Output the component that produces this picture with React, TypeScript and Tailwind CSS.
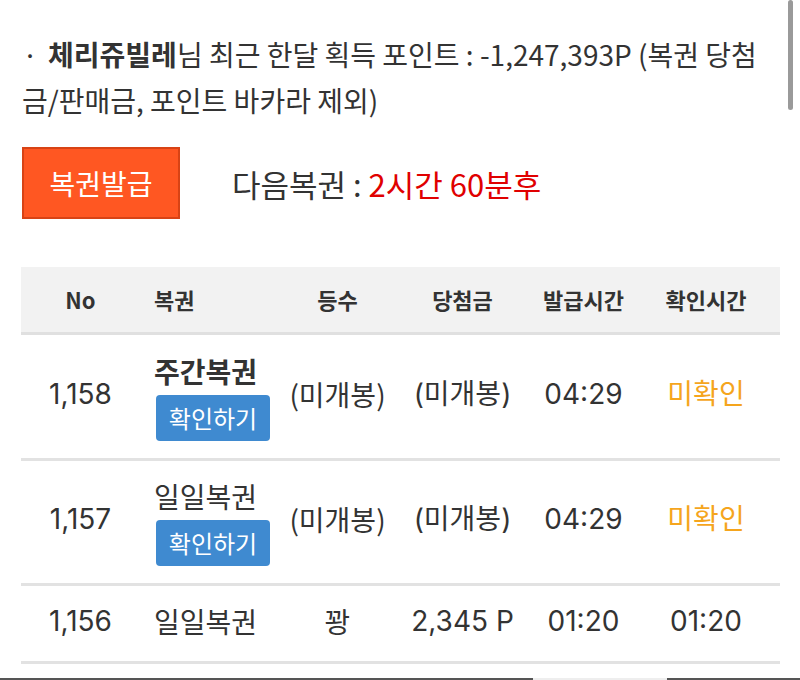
import React from "react";

const font = { fontFamily: '"Noto Sans CJK KR", "Noto Sans", sans-serif' };
const numFont = { fontFamily: '"Inter", "Noto Sans CJK KR", sans-serif' };

type Row = {
  no: string;
  name: string;
  bold?: boolean;
  check?: boolean;
  rank: string;
  prize: string;
  issued: string;
  confirmed: string;
  pending?: boolean;
  h: string;
};

const rows: Row[] = [
  { no: "1,158", name: "주간복권", bold: true, check: true, rank: "(미개봉)", prize: "(미개봉)", issued: "04:29", confirmed: "미확인", pending: true, h: "h-[126px]" },
  { no: "1,157", name: "일일복권", check: true, rank: "(미개봉)", prize: "(미개봉)", issued: "04:29", confirmed: "미확인", pending: true, h: "h-[125px]" },
  { no: "1,156", name: "일일복권", rank: "꽝", prize: "2,345 P", issued: "01:20", confirmed: "01:20", h: "h-[78px]" },
];

const cols = "grid grid-cols-[119px_145px_105px_145px_97px_148px]";

export default function App() {
  return (
    <div className="relative w-[800px] h-[680px] overflow-hidden bg-white text-[#333]" style={font}>
      <div className="pl-[22px] pr-[30px] pt-[31px]">
        <p className="text-[28px] leading-[46px] text-[#333]">
          <span className="ml-[4px] mr-[14px] leading-none" style={numFont}>·</span>
          <b className="font-bold">체리쥬빌레</b>님 최근 한달 획득 포인트 : -1,247,393P (복권 당첨금/판매금, 포인트 바카라 제외)
        </p>
        <div className="mt-[24px] flex items-center">
          <button className="w-[158px] h-[72px] bg-[#ff5722] border-2 border-[#d84315] text-white text-[28px] leading-none">
            복권발급
          </button>
          <div className="ml-[52px] text-[31px] leading-none">
            <span className="text-[#333]">다음복권 : </span>
            <span className="text-[#e00000]">2시간 60분후</span>
          </div>
        </div>
      </div>

      <div className="mt-[48px] ml-[21px] w-[759px]">
        <div className={`${cols} h-[68px] items-center bg-[#f2f2f2] border-b-[3px] border-[#e0e0e0] text-[22px] font-bold text-[#333]`}>
          <div className="text-center">No</div>
          <div className="pl-[14px]">복권</div>
          <div className="text-center">등수</div>
          <div className="text-center">당첨금</div>
          <div className="text-center">발급시간</div>
          <div className="text-center">확인시간</div>
        </div>
        {rows.map((r) => (
          <div
            key={r.no}
            className={`${cols} ${r.h} items-center border-b-[3px] border-[#e2e2e2] text-[28px] text-[#333]`}
          >
            <div className="text-center pb-[6px]" style={numFont}>{r.no}</div>
            <div className={`pl-[14px] flex flex-col items-start ${r.check ? "" : "pb-[6px]"}`}>
              <div className={`whitespace-nowrap ${r.check ? "leading-[36px]" : ""} ${r.bold ? "font-bold" : ""}`}>{r.name}</div>
              {r.check && (
                <button className="mt-[6px] w-[114px] h-[46px] rounded-[4px] bg-[#3f8ad0] text-white text-[24px] leading-none ml-[2px]">
                  확인하기
                </button>
              )}
            </div>
            <div className="text-center whitespace-nowrap pb-[6px]">{r.rank}</div>
            <div className="text-center whitespace-nowrap pb-[6px]" style={numFont}>{r.prize}</div>
            <div className="text-center pb-[6px]" style={numFont}>{r.issued}</div>
            <div className={`text-center pb-[6px] ${r.pending ? "text-[#f5a51d]" : ""}`} style={numFont}>{r.confirmed}</div>
          </div>
        ))}
      </div>

      <div className="absolute right-[7px] top-0 w-[5px] h-[110px] rounded-full bg-[#9a9a9a]" />
      <div className="absolute bottom-0 left-0 w-full h-[2px] flex">
        <div className="w-[533px] bg-[#555]" />
        <div className="w-[134px] bg-[#eeeeee]" />
        <div className="flex-1 bg-[#555]" />
      </div>
    </div>
  );
}
